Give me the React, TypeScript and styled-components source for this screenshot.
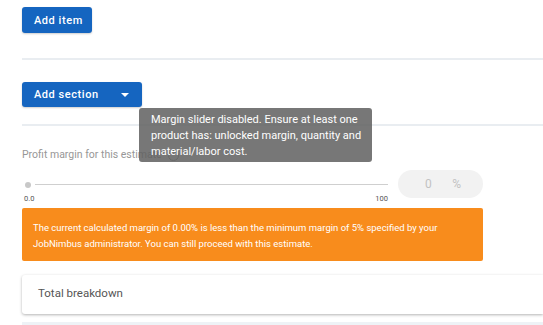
import React from "react";
import styled, { createGlobalStyle } from "styled-components";

const Global = createGlobalStyle`
  html, body { margin: 0; padding: 0; background: #fff; }
  body { font-family: Roboto, "Liberation Sans", Arial, sans-serif; overflow: hidden; }
`;

const Page = styled.div`
  width: 543px;
  height: 325px;
  padding: 7px 0 0 22px;
  box-sizing: border-box;
  overflow: hidden;
`;

const PrimaryButton = styled.button<{ $w: number; $h: number }>`
  display: flex;
  align-items: center;
  justify-content: space-between;
  width: ${(p) => p.$w}px;
  height: ${(p) => p.$h}px;
  padding: 0 12px;
  box-sizing: border-box;
  border: none;
  border-radius: 3px;
  background: #1565c0;
  color: #fff;
  font-family: Roboto, "Liberation Sans", Arial, sans-serif;
  font-weight: 500;
  font-size: 11px;
  letter-spacing: 0.55px;
  white-space: nowrap;
  box-shadow: 0 1px 2px rgba(0, 0, 0, 0.2);
  cursor: pointer;
`;

const Caret = styled.span`
  width: 0;
  height: 0;
  border-left: 4px solid transparent;
  border-right: 4px solid transparent;
  border-top: 4px solid #fff;
  margin-right: 1px;
`;

const Divider = styled.div<{ $top: number }>`
  height: 2px;
  background: #e9edf1;
  margin-top: ${(p) => p.$top}px;
`;

const SectionWrap = styled.div`
  position: relative;
  margin-top: 22px;
  width: 120px;
`;

const Tooltip = styled.div`
  position: absolute;
  left: 117px;
  top: 26px;
  width: 233px;
  height: 54px;
  box-sizing: border-box;
  padding: 4px 8px 0 12px;
  background: rgba(97, 97, 97, 0.86);
  color: #fff;
  border-radius: 3px;
  font-size: 11px;
  line-height: 16px;
  z-index: 10;
`;

const Label = styled.div`
  display: flex;
  align-items: center;
  gap: 6px;
  margin-top: 21px;
  color: #979797;
  font-size: 10.5px;
  line-height: 16px;
`;

const InfoIcon = styled.span`
  width: 11px;
  height: 11px;
  border: 1px solid #979797;
  border-radius: 50%;
  box-sizing: border-box;
`;

const SliderRow = styled.div`
  display: flex;
  align-items: flex-start;
  margin-top: 7px;
`;

const SliderBox = styled.div`
  width: 366px;
  padding-top: 10px;
`;

const Track = styled.div`
  display: flex;
  align-items: center;
  gap: 4px;
  height: 9px;
  padding-left: 3px;
`;

const Thumb = styled.span`
  width: 6px;
  height: 6px;
  border-radius: 50%;
  background: #c8c8c8;
`;

const Rail = styled.span`
  flex: 1;
  height: 1px;
  background: #cfcfcf;
`;

const SliderLabels = styled.div`
  display: flex;
  justify-content: space-between;
  margin-top: 5px;
  font-size: 7.5px;
  line-height: 9px;
  color: #555;
  padding: 0 0 0 2px;
`;

const PercentBox = styled.div`
  display: flex;
  align-items: center;
  justify-content: space-between;
  margin-left: 10px;
  width: 85px;
  height: 28px;
  padding: 0 22px 0 27px;
  box-sizing: border-box;
  background: #f2f2f2;
  border-radius: 14px;
  color: #c2c2c2;
  font-size: 12px;
`;

const Alert = styled.div`
  width: 461px;
  height: 53px;
  box-sizing: border-box;
  margin-top: 5px;
  padding: 12px 10px 0 11px;
  background: #f88c1c;
  border-radius: 2px;
  color: #fff;
  font-size: 9.5px;
  line-height: 16px;
`;

const Card = styled.div`
  margin-top: 14px;
  height: 39px;
  box-sizing: border-box;
  display: flex;
  align-items: center;
  padding: 0 0 3px 16px;
  background: #fff;
  border-radius: 3px 0 0 3px;
  box-shadow: 0 1px 3px rgba(0, 0, 0, 0.3);
  color: #555;
  font-size: 11.5px;
`;

const BottomBar = styled.div`
  margin-top: 8px;
  height: 4px;
  background: #eef2f6;
`;

export default function App() {
  return (
    <>
      <Global />
      <Page>
        <PrimaryButton $w={70} $h={26}>Add item</PrimaryButton>
        <Divider $top={25} />
        <SectionWrap>
          <PrimaryButton $w={120} $h={25}>
            Add section
            <Caret />
          </PrimaryButton>
          <Tooltip>
            Margin slider disabled. Ensure at least one product has: unlocked margin, quantity and
            material/labor cost.
          </Tooltip>
        </SectionWrap>
        <Divider $top={17} />
        <Label>
          Profit margin for this estimate
          <InfoIcon />
        </Label>
        <SliderRow>
          <SliderBox>
            <Track>
              <Thumb />
              <Rail />
            </Track>
            <SliderLabels>
              <span>0.0</span>
              <span>100</span>
            </SliderLabels>
          </SliderBox>
          <PercentBox>
            <span>0</span>
            <span>%</span>
          </PercentBox>
        </SliderRow>
        <Alert>
          The current calculated margin of 0.00% is less than the minimum margin of 5% specified by your
          JobNimbus administrator. You can still proceed with this estimate.
        </Alert>
        <Card>Total breakdown</Card>
        <BottomBar />
      </Page>
    </>
  );
}
